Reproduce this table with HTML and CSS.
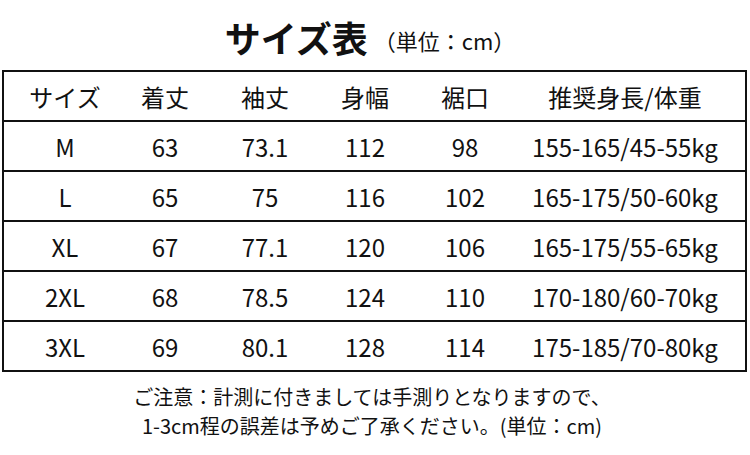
FILE: index.html
```html
<!DOCTYPE html>
<html lang="ja">
<head>
<meta charset="utf-8">
<link rel="stylesheet" href="styles.css">
</head>
<body>
<div class="page">
  <h1 class="title"><span class="title-main">サイズ表</span><span class="title-unit">（単位：cm）</span></h1>
  <div class="size-table">
    <div class="row head">
      <div>サイズ</div><div>着丈</div><div>袖丈</div><div>身幅</div><div>裾口</div><div>推奨身長/体重</div>
    </div>
    <div class="row">
      <div>M</div><div>63</div><div>73.1</div><div>112</div><div>98</div><div>155-165/45-55kg</div>
    </div>
    <div class="row">
      <div>L</div><div>65</div><div>75</div><div>116</div><div>102</div><div>165-175/50-60kg</div>
    </div>
    <div class="row">
      <div>XL</div><div>67</div><div>77.1</div><div>120</div><div>106</div><div>165-175/55-65kg</div>
    </div>
    <div class="row">
      <div>2XL</div><div>68</div><div>78.5</div><div>124</div><div>110</div><div>170-180/60-70kg</div>
    </div>
    <div class="row">
      <div>3XL</div><div>69</div><div>80.1</div><div>128</div><div>114</div><div>175-185/70-80kg</div>
    </div>
  </div>
  <div class="note">
    <p>ご注意：計測に付きましては手測りとなりますので、</p>
    <p>1-3cm程の誤差は予めご了承ください。(単位：cm)</p>
  </div>
</div>
</body>
</html>
```
FILE: styles.css
```css
* { box-sizing: border-box; }
html, body { margin: 0; padding: 0; background: #fff; }
body {
  font-family: "Noto Sans CJK JP", "Noto Sans", sans-serif;
  color: #111;
  width: 750px;
  height: 455px;
  overflow: hidden;
}
.page { display: flex; flex-direction: column; }
.title {
  margin: 0;
  height: 70px;
  display: flex;
  align-items: center;
  justify-content: center;
  padding-right: 10px;
  padding-top: 4px;
  font-weight: normal;
}
.title-main {
  font-size: 36px;
  font-weight: 700;
}
.title-unit {
  font-size: 22px;
  margin-left: 6px;
  padding-top: 6px;
}
.size-table {
  margin-left: 2px;
  width: 745px;
  border: 2px solid #111;
}
.row {
  display: grid;
  grid-template-columns: 100px 100px 100px 100px 100px 220px;
  padding-left: 11px;
  height: 50px;
  align-items: center;
  border-bottom: 2px solid #111;
  font-size: 24px;
  text-align: center;
}
.row:last-child { border-bottom: none; height: 48px; }
.row.head { font-size: 24px; }
.note {
  padding-top: 10px;
  padding-right: 6px;
  text-align: center;
  font-size: 20px;
  line-height: 29px;
}
.note p { margin: 0; }
```
